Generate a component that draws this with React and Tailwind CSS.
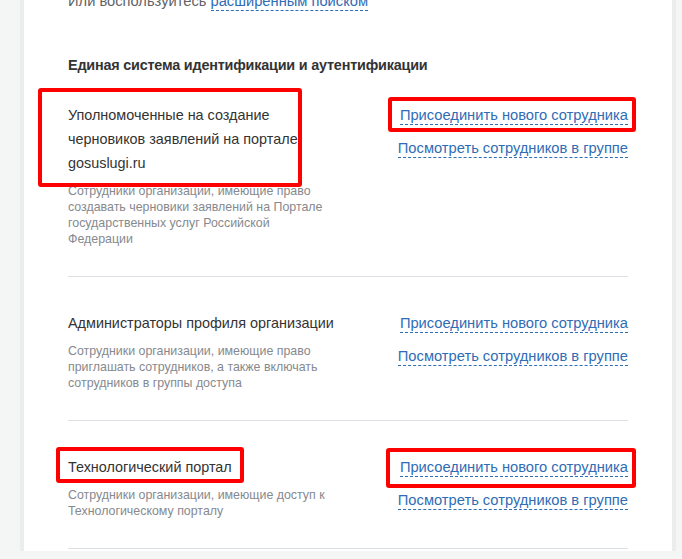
const sections = [
  {
    title: "Уполномоченные на создание черновиков заявлений на портале gosuslugi.ru",
    desc: "Сотрудники организации, имеющие право создавать черновики заявлений на Портале государственных услуг Российской Федерации",
    titleMark: "big",
    linkMark: "first",
  },
  {
    title: "Администраторы профиля организации",
    desc: "Сотрудники организации, имеющие право приглашать сотрудников, а также включать сотрудников в группы доступа",
  },
  {
    title: "Технологический портал",
    desc: "Сотрудники организации, имеющие доступ к Технологическому порталу",
    titleMark: "small",
    linkMark: "last",
  },
];

const DashLink = ({ children, className = "" }) => (
  <span
    className={`inline-block leading-[18px] text-[14.7px] text-[#2f6db5] border-b border-dashed border-[#2f6db5] cursor-pointer ${className}`}
  >
    {children}
  </span>
);

const Section = ({ title, desc, titleMark, linkMark, first }) => (
  <div
    className={`flex justify-between items-start pb-[29px] border-b border-[#dcdfe3] ${
      first ? "pt-[28px]" : "pt-[34px]"
    }`}
  >
    <div className="w-[274px]">
      <div className="relative text-[14.4px] leading-[24px] text-[#333]">
        {titleMark === "big" && (
          <div className="absolute left-[-30px] top-[-15px] w-[264px] h-[99px] border-4 border-[#ff0000] rounded-[3px]" />
        )}
        {titleMark === "small" && (
          <div className="absolute left-[-12px] top-[-8px] w-[188px] h-[36px] border-4 border-[#ff0000] rounded-[3px]" />
        )}
        {title}
      </div>
      <p className="mt-2 w-[262px] text-[12.4px] leading-[16px] text-[#86898e]">{desc}</p>
    </div>
    <div className="flex flex-col items-end pt-[3px] gap-[14px]">
      <div className="relative flex">
        {linkMark === "first" && (
          <div className="absolute left-[-12px] top-[-9px] w-[248px] h-[35px] border-4 border-[#ff0000] rounded-[3px]" />
        )}
        {linkMark === "last" && (
          <div className="absolute left-[-14px] top-[-10px] w-[250px] h-[40px] border-4 border-[#ff0000] rounded-[3px]" />
        )}
        <DashLink>Присоединить нового сотрудника</DashLink>
      </div>
      <DashLink>Посмотреть сотрудников в группе</DashLink>
    </div>
  </div>
);

export default function App() {
  return (
    <div
      className="h-[559px] overflow-hidden bg-[#f4f6f6] pl-[20px] pr-[6px]"
      style={{ fontFamily: '"Liberation Sans", Arial, sans-serif' }}
    >
      <div className="h-full bg-white border-x-4 border-[#ebeded] px-[44px]">
        <div className="mt-[-8px] text-[14.7px] leading-[18px] text-[#5f6368]">
          Или воспользуйтесь <DashLink>расширенным поиском</DashLink>
        </div>
        <h2 className="mt-[44px] text-[14.4px] leading-[20px] font-bold text-[#333] tracking-[-0.2px]">
          Единая система идентификации и аутентификации
        </h2>
        {sections.map((s, i) => (
          <Section key={s.title} first={i === 0} {...s} />
        ))}
      </div>
    </div>
  );
}
